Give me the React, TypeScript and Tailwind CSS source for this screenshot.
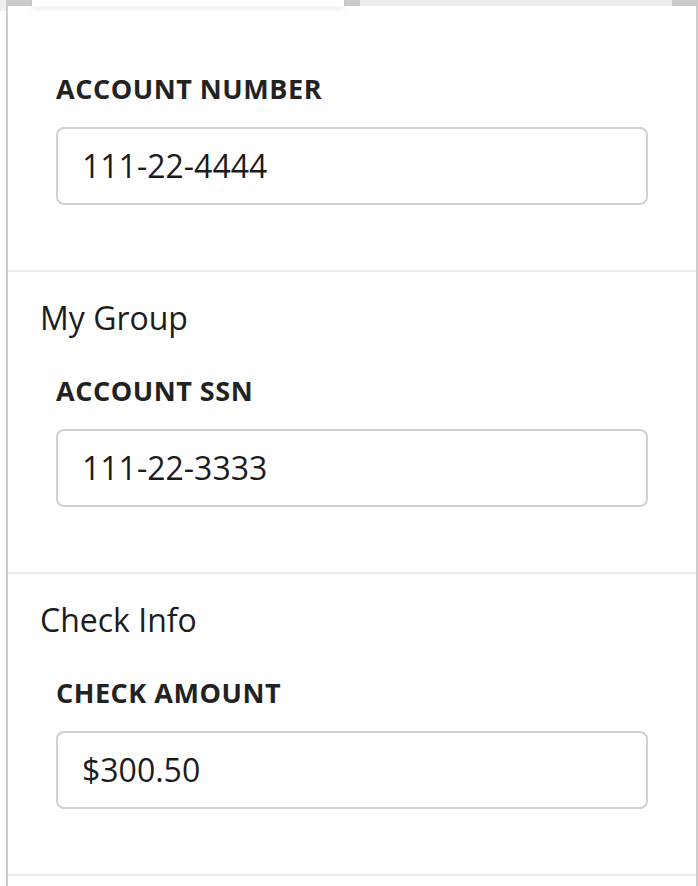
const fields = [
    { group: null, label: "ACCOUNT NUMBER", value: "111-22-4444" },
    { group: "My Group", label: "ACCOUNT SSN", value: "111-22-3333" },
    { group: "Check Info", label: "CHECK AMOUNT", value: "$300.50" },
]

const Field = ({ label, value }: { label: string; value: string }) => {
    return (
        <div className="px-12">
            <p className="text-[27px] leading-[36px] font-bold tracking-[0.02em] text-[#222]">{label}</p>
            <div className="mt-5 h-[78px] border-2 border-[#d0d0d0] rounded-lg flex items-center px-6">
                <span className="text-[32px] leading-none text-[#1c1c1c]">{value}</span>
            </div>
        </div>
    )
}

export default function App() {
    return (
        <div className="w-[698px] h-[886px] overflow-hidden bg-white flex" style={{ fontFamily: '"Open Sans", sans-serif' }}>
            <div className="w-[6px] shrink-0">
                <div className="h-[11px] bg-[#efefef]"></div>
            </div>
            <div className="flex-1 flex flex-col">
                <div className="h-[6px] bg-[#cbcbcb] flex gap-4 px-[26px] shrink-0">
                    <div className="w-[312px] bg-white relative z-10 shadow-[0_3px_6px_rgba(0,0,0,0.08)]"></div>
                    <div className="w-[312px] bg-[#ebebeb]"></div>
                </div>
                <div className="flex-1 border-l-2 border-r-2 border-[#cccccc]">
                    {fields.map((f, i) => (
                        <div key={i} className={`border-b-2 border-[#ebebeb] pb-[65px] ${f.group ? "pt-[22px]" : "pt-[65px]"}`}>
                            {f.group && (
                                <p className="px-8 mb-[31px] text-[32px] leading-[48px] text-[#1c1c1c]">{f.group}</p>
                            )}
                            <Field label={f.label} value={f.value} />
                        </div>
                    ))}
                </div>
            </div>
        </div>
    )
}
